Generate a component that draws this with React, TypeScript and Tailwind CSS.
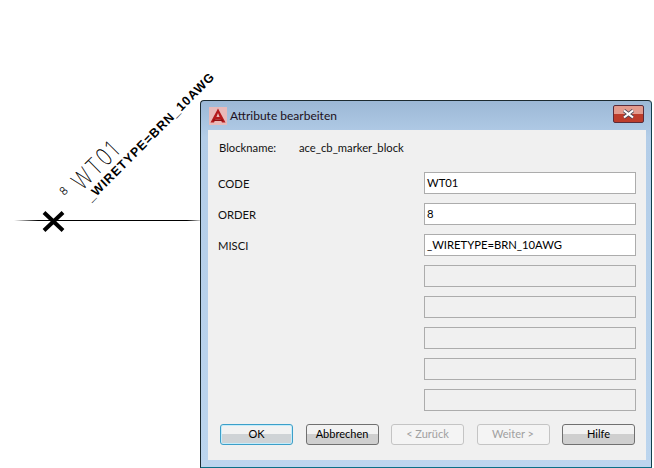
const font = "[font-family:Lato,'Liberation_Sans',sans-serif]";

function Field({ label, value }: { label?: string; value?: string }) {
  const enabled = value !== undefined;
  return (
    <div className="flex h-[22px] items-center justify-between">
      <span className="pl-[1px] pt-[2px] text-[11.25px] text-[#111]">{label}</span>
      <div
        className={
          enabled
            ? "flex h-[22px] w-[212px] items-center border border-[#acacac] bg-white pl-[2px] text-[11.25px] text-black"
            : "h-[22px] w-[212px] border border-[#acacac] bg-[#f0f0f0]"
        }
      >
        {value}
      </div>
    </div>
  );
}

function Btn({ label, variant }: { label: string; variant?: "default" | "disabled" }) {
  const cls =
    variant === "default"
      ? "border-[#3c9fc9] bg-gradient-to-b from-[#f2f2f2] from-50% to-[#cfd3d6] to-50% text-black shadow-[inset_0_0_0_1px_#c5ecfa]"
      : variant === "disabled"
        ? "border-[#c4c4c4] bg-[#f4f4f4] text-[#a0a0a0]"
        : "border-[#707070] bg-gradient-to-b from-[#f2f2f2] from-50% to-[#cfcfcf] to-50% text-black";
  return (
    <div className={`flex h-[21px] w-[73px] items-center justify-center rounded-[3px] border text-[11px] ${cls}`}>
      {label}
    </div>
  );
}

export default function App() {
  return (
    <div className={`relative h-[468px] w-[654px] overflow-hidden bg-white ${font}`}>
      {/* CAD drawing */}
      <svg className="absolute left-0 top-0" width="230" height="240" viewBox="0 0 230 240">
        <defs>
          <linearGradient id="wire" x1="0" x2="1" y1="0" y2="0">
            <stop offset="0" stopColor="#000" stopOpacity="0" />
            <stop offset="0.13" stopColor="#000" />
            <stop offset="0.93" stopColor="#000" />
            <stop offset="1" stopColor="#000" stopOpacity="0.2" />
          </linearGradient>
        </defs>
        <rect x="14" y="220" width="186" height="1" fill="url(#wire)" />
        <path d="M44 212.5 L63 230.5 M63 212.5 L44 230.5" stroke="#000" strokeWidth="4" fill="none" />
        <text
          transform="translate(64 196) rotate(-45)"
          fontFamily="Inter,sans-serif"
          fontWeight="200"
          fontSize="11"
          stroke="#000"
          strokeWidth="0.2"
          fill="#000"
        >
          8
        </text>
        <text
          transform="translate(82 191) rotate(-45) scale(0.8 1)"
          fontFamily="Inter,sans-serif"
          fontWeight="100"
          fontSize="24"
          letterSpacing="3"
          stroke="#000"
          strokeWidth="0.35"
          fill="#000"
        >
          WT01
        </text>
        <text
          transform="translate(91 202) rotate(-45)"
          fontFamily="'Liberation Sans',sans-serif"
          fontWeight="700"
          fontSize="12.5"
          letterSpacing="1"
          fill="#000"
        >
          _WIRETYPE=BRN_10AWG
        </text>
      </svg>

      {/* Dialog window */}
      <div className="absolute left-[200px] top-[100px] flex h-[368px] w-[452px] flex-col rounded-t-[4px] border border-[#1c2a30] border-b-[#0a6f86] border-r-[#123f4c] bg-gradient-to-b from-[#9cb8d6] via-[#b3cde8] via-[10%] to-[#bcd5ee] pb-[7px] pl-[7px] pr-[5px]">
        <div className="flex h-[29px] shrink-0 items-center">
          <svg width="18" height="18" viewBox="0 0 18 18" className="ml-[1px] shrink-0">
            <rect width="18" height="18" fill="#e8b9b9" />
            <path d="M9 1.5 L16.5 15.5 H13 L11.6 12.5 H6.4 L5 15.5 H1.5 Z" fill="#b3191c" />
            <path d="M4.5 12.5 H13.5 L14 14 H4 Z" fill="#8f1013" />
            <path d="M9 6 L10.6 10 H7.4 Z" fill="#e8b9b9" />
          </svg>
          <span className="ml-[3px] text-[12px] text-[#1d1020]">Attribute bearbeiten</span>
          <div className="ml-auto mr-[2px] mt-[-3px] flex h-[18px] w-[31px] items-center justify-center rounded-[2px] border border-[#5a2b3a] bg-gradient-to-b from-[#e39a8d] from-50% to-[#bd3c2b] to-50%">
            <svg width="13" height="10" viewBox="0 0 13 10">
              <path d="M2 1.5 L11 8.5 M11 1.5 L2 8.5" stroke="#4b4b5a" strokeWidth="3.6" />
              <path d="M2 1.5 L11 8.5 M11 1.5 L2 8.5" stroke="#fff" strokeWidth="2.2" />
            </svg>
          </div>
        </div>

        <div className="flex min-h-0 flex-1 flex-col bg-[#f0f0f0] pl-[9px] pr-[10px] pt-[11px]">
          <div className="flex h-[15px] items-center pl-[2px] text-[11.25px] text-[#111]">
            <span className="w-[80px]">Blockname:</span>
            <span>ace_cb_marker_block</span>
          </div>
          <div className="mt-[16px] flex flex-col gap-[9px]">
            <Field label="CODE" value="WT01" />
            <Field label="ORDER" value="8" />
            <Field label="MISCI" value="_WIRETYPE=BRN_10AWG" />
            <Field />
            <Field />
            <Field />
            <Field />
            <Field />
          </div>
          <div className="mt-[13px] flex items-center justify-between pl-[3px] pr-[1px]">
            <Btn label="OK" variant="default" />
            <Btn label="Abbrechen" />
            <Btn label="< Zurück" variant="disabled" />
            <Btn label="Weiter >" variant="disabled" />
            <Btn label="Hilfe" />
          </div>
        </div>
      </div>
    </div>
  );
}
